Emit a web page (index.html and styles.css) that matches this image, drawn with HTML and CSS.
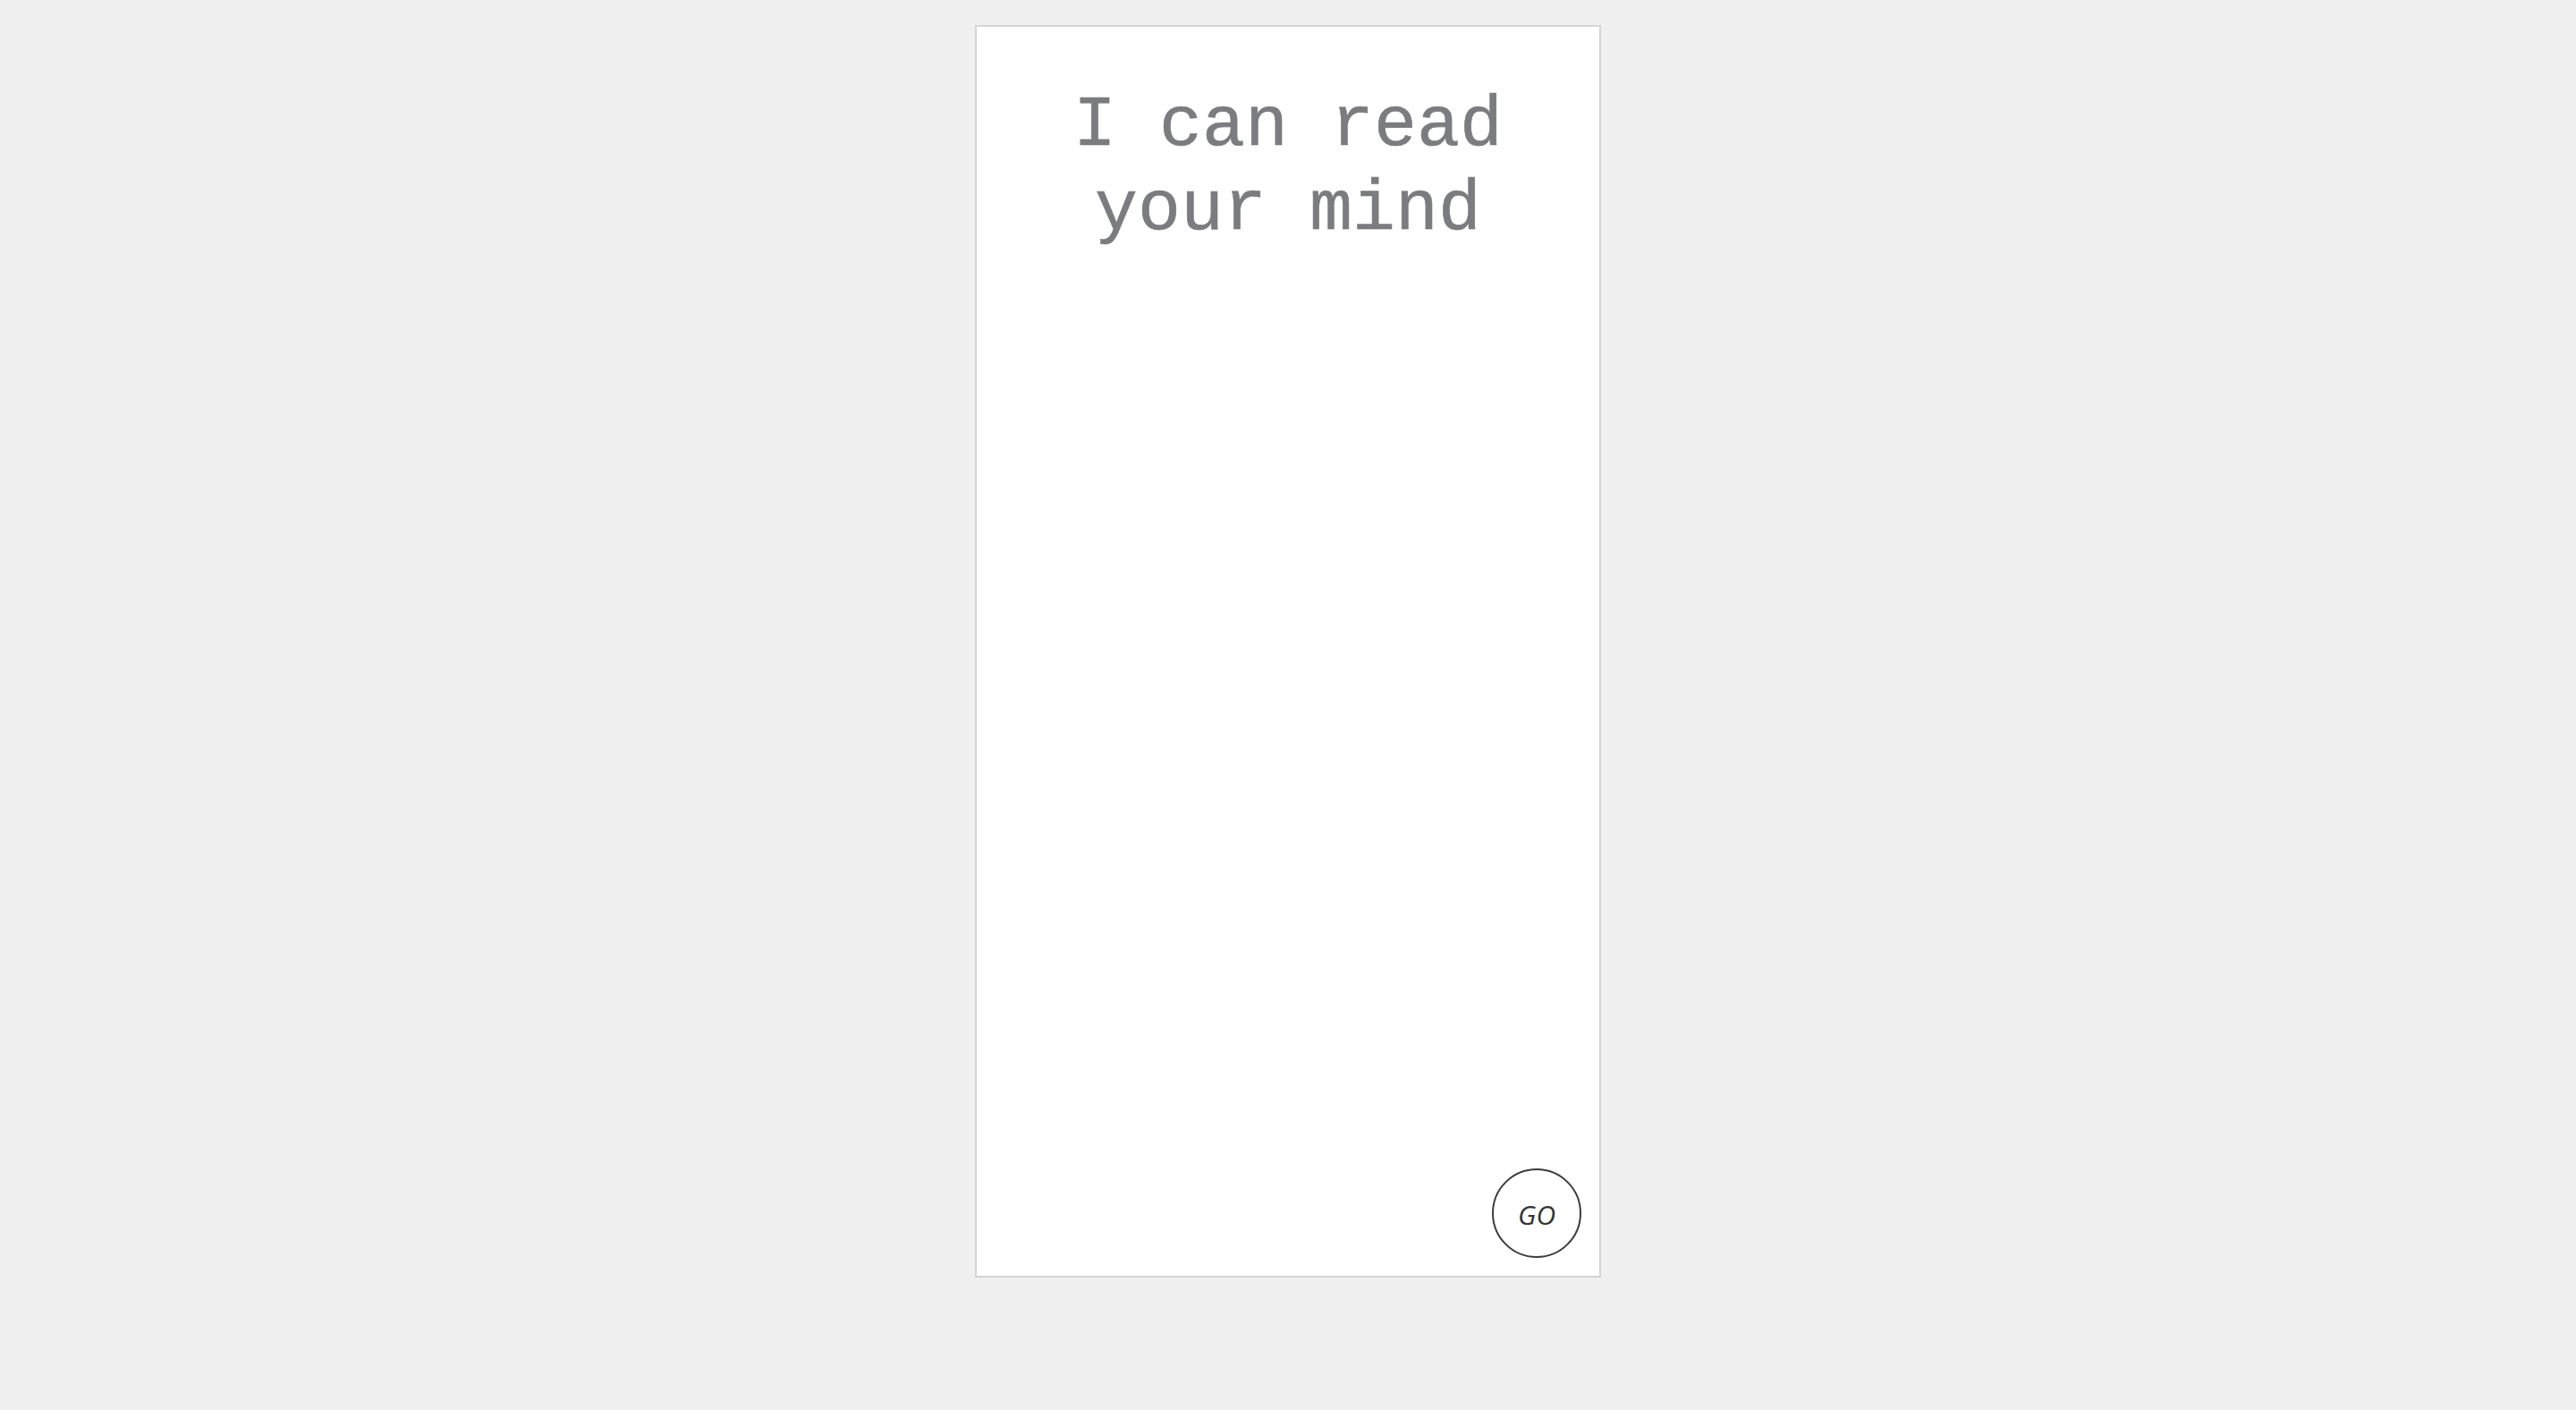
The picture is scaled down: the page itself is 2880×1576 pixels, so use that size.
FILE: index.html
```html
<!DOCTYPE html>
<html lang="en">
<head>
<meta charset="utf-8">
<title>I can read your mind</title>
<link rel="stylesheet" href="styles.css">
</head>
<body>
  <main class="card">
    <h1 class="title">I can read your mind</h1>
    <button class="go" type="button">GO</button>
  </main>
</body>
</html>
```

FILE: styles.css
```css
* { box-sizing: border-box; }
html, body {
  margin: 0;
  padding: 0;
  background: #f0f0f0;
}
body {
  padding-top: 28px;
}
.card {
  position: relative;
  width: 700px;
  height: 1400px;
  margin: 0 auto;
  background: #ffffff;
  border: 2px solid #d4d4d4;
  display: flex;
  flex-direction: column;
  align-items: center;
}
.title {
  margin: 64px 0 0 0;
  width: 500px;
  text-align: center;
  font-family: "Liberation Mono", "Courier New", monospace;
  font-weight: normal;
  font-size: 80px;
  line-height: 94px;
  color: #7b7c80;
  -webkit-text-stroke: 0.6px #7b7c80;
}
.go {
  position: absolute;
  right: 20px;
  bottom: 20px;
  width: 100px;
  height: 100px;
  border-radius: 50%;
  border: 2px solid #3c3c40;
  background: #ffffff;
  padding: 2px 0 0 0;
  font-family: "Open Sans", "Noto Sans", sans-serif;
  font-style: italic;
  font-size: 30px;
  color: #333336;
  cursor: pointer;
}
```
